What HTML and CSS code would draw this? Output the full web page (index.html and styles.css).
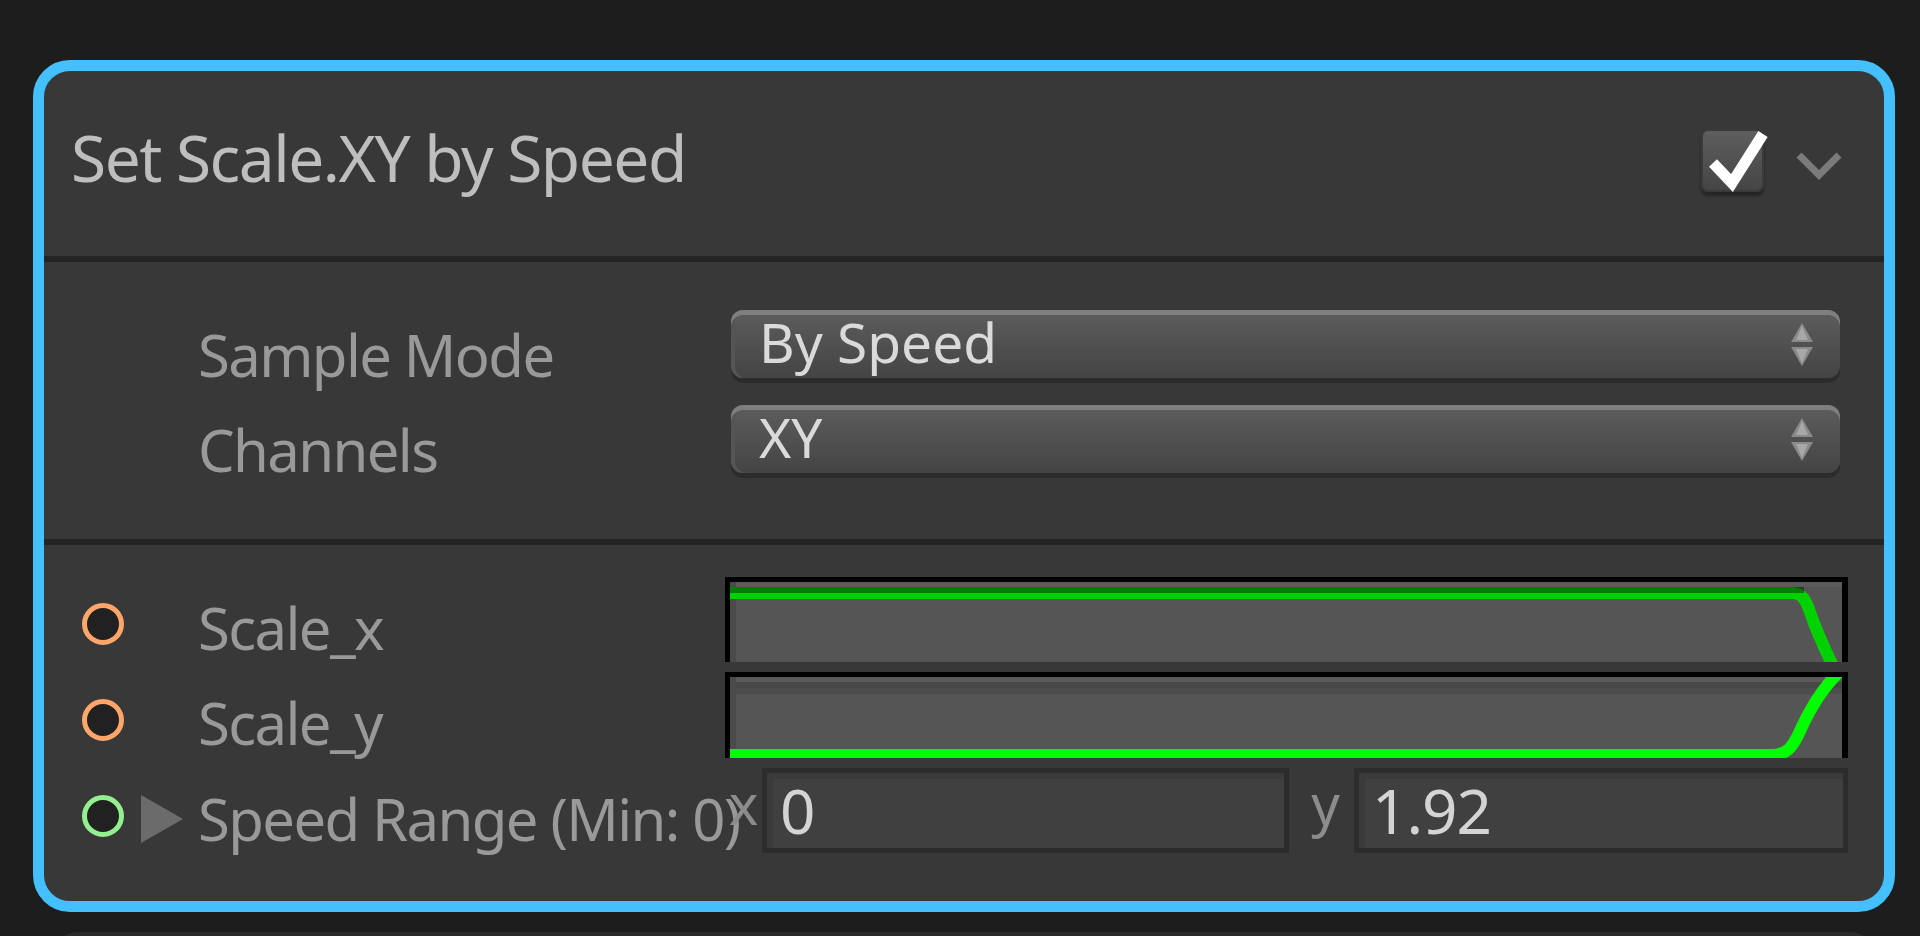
FILE: index.html
```html
<!DOCTYPE html>
<html>
<head>
<meta charset="utf-8">
<link rel="stylesheet" href="styles.css">
</head>
<body>
<div class="page">
  <div class="block">
    <div class="header">
      <div class="title">Set Scale.XY by Speed</div>
      <div class="header-tools">
        <div class="checkbox">
          <svg class="check" width="63" height="63" viewBox="0 0 63 63"><polyline points="12,34 31,54 62,5" fill="none" stroke="#ffffff" stroke-width="11"/></svg>
        </div>
        <svg class="chevron" width="46" height="28" viewBox="0 0 46 28"><polyline points="3,3 23,23 43,3" fill="none" stroke="#7b7b7b" stroke-width="7"/></svg>
      </div>
    </div>
    <div class="sep"></div>
    <div class="settings">
      <div class="setting-row">
        <div class="setting-label">Sample Mode</div>
        <div class="dropdown">
          <span class="dropdown-value">By Speed</span>
          <svg class="updown" width="28" height="46" viewBox="0 0 28 46"><polygon points="14,1 25,20 3,20" fill="#8a8a8a"/><polygon points="14,4 20,18 8,18" fill="#a8a8a8"/><polygon points="3,25 25,25 14,44" fill="#8a8a8a"/><polygon points="8,27 20,27 14,41" fill="#a8a8a8"/></svg>
        </div>
      </div>
      <div class="setting-row">
        <div class="setting-label">Channels</div>
        <div class="dropdown">
          <span class="dropdown-value">XY</span>
          <svg class="updown" width="28" height="46" viewBox="0 0 28 46"><polygon points="14,1 25,20 3,20" fill="#8a8a8a"/><polygon points="14,4 20,18 8,18" fill="#a8a8a8"/><polygon points="3,25 25,25 14,44" fill="#8a8a8a"/><polygon points="8,27 20,27 14,41" fill="#a8a8a8"/></svg>
        </div>
      </div>
    </div>
    <div class="sep"></div>
    <div class="props">
      <div class="prop-row row-a">
        <div class="port-cell"><div class="port port-orange"></div></div>
        <div class="prop-label">Scale_x</div>
        <div class="curve-field">
          <svg class="curve" width="1112" height="80" viewBox="0 0 1112 80">
            <rect x="0" y="0" width="1112" height="5" fill="#5b5b5b"/>
            <rect x="0" y="0" width="6" height="80" fill="#4a4a4a"/>
            <path d="M0,11 L1062,11 C1072,11 1076,18 1080,30 C1086,48 1096,70 1106,90" fill="none" stroke="#00d200" stroke-width="12"/>
            <rect x="0" y="5" width="1074" height="6" fill="#000" opacity="0.4"/>
          </svg>
        </div>
      </div>
      <div class="prop-row row-b">
        <div class="port-cell"><div class="port port-orange"></div></div>
        <div class="prop-label">Scale_y</div>
        <div class="curve-field tall">
          <svg class="curve" width="1112" height="81" viewBox="0 0 1112 81">
            <rect x="0" y="0" width="1112" height="5" fill="#5a5a5a"/>
            <rect x="0" y="5" width="1112" height="6" fill="#474747"/>
            <rect x="0" y="11" width="1112" height="6" fill="#4d4d4d"/>
            <rect x="0" y="0" width="6" height="81" fill="#4a4a4a"/>
            <path d="M0,78 L1040,78 C1056,78 1062,72 1070,54 C1078,36 1090,14 1108,-4" fill="none" stroke="#00ff00" stroke-width="12"/>
          </svg>
        </div>
      </div>
      <div class="prop-row row-c">
        <div class="port-cell"><div class="port port-green"></div><div class="expander"></div></div>
        <div class="prop-label">Speed Range (Min: 0)</div>
        <div class="vector-field">
          <span class="axis-label axis-x">x</span>
          <div class="num-field num-x">0</div>
          <span class="axis-label axis-y">y</span>
          <div class="num-field num-y">1.92</div>
        </div>
      </div>
    </div>
  </div>
  <div class="next-block"></div>
</div>
</body>
</html>
```

FILE: styles.css
```css
html, body {
  margin: 0;
  padding: 0;
}
body {
  background: #1d1d1d;
  font-family: "Noto Sans", "Open Sans", sans-serif;
  height: 936px;
  overflow: hidden;
}
.page {
  padding: 60px 0 0 33px;
}
.block {
  box-sizing: border-box;
  width: 1862px;
  height: 852px;
  border: 11px solid #44c0ff;
  border-radius: 37px;
  background: #383838;
  display: flex;
  flex-direction: column;
}
.header {
  height: 185px;
  display: flex;
  align-items: center;
  padding: 0 42px 0 27px;
}
.title {
  flex: 1;
  font-size: 64px;
  line-height: 1;
  letter-spacing: -1.5px;
  color: #bebebe;
  margin-bottom: 11px;
  white-space: nowrap;
}
.header-tools {
  display: flex;
  align-items: center;
  gap: 32px;
}
.checkbox {
  box-sizing: border-box;
  width: 63px;
  height: 63px;
  border-radius: 7px;
  background: linear-gradient(#5e5e5e, #454545);
  border: 2px solid #3a3a3a;
  box-shadow: 0 4px 3px rgba(0, 0, 0, 0.35);
  margin-bottom: 6px;
  position: relative;
}
.check {
  position: absolute;
  left: -2px;
  top: -2px;
  overflow: visible;
}
.chevron {
  display: block;
  margin-top: 4px;
}
.sep {
  height: 6px;
  background: #242424;
  flex: none;
}
.settings {
  box-sizing: border-box;
  height: 277px;
  padding: 48px 44px 0 154px;
  display: flex;
  flex-direction: column;
  gap: 22px;
}
.setting-row {
  display: flex;
  height: 73px;
}
.setting-label {
  width: 533px;
  flex: none;
  font-size: 58px;
  line-height: 70px;
  letter-spacing: -1.6px;
  padding-top: 10px;
  color: #999999;
  white-space: nowrap;
}
.dropdown {
  flex: 1;
  height: 68px;
  box-sizing: border-box;
  border-radius: 12px;
  background: linear-gradient(#5d5d5d, #444444);
  box-shadow: inset 0 5px 0 #7f7f7f, inset 4px 0 0 #555, 0 5px 0 #2c2c2c;
  display: flex;
  align-items: center;
  padding: 0 24px 0 28px;
}
.dropdown-value {
  flex: 1;
  font-size: 55px;
  line-height: 68px;
  color: #dadada;
  margin-top: -4px;
}
.updown {
  display: block;
  margin-top: 2px;
}
.props {
  box-sizing: border-box;
  height: 356px;
  padding-top: 32px;
  display: flex;
  flex-direction: column;
}
.prop-row {
  display: flex;
  height: 96px;
}
.row-a {
  height: 95px;
}
.port-cell {
  width: 154px;
  flex: none;
  display: flex;
  align-items: flex-start;
}
.port {
  box-sizing: border-box;
  width: 42px;
  height: 42px;
  border-radius: 50%;
  background: #212121;
  margin-left: 38px;
  margin-top: 26px;
}
.row-b .port, .row-c .port {
  margin-top: 27px;
}
.port-orange {
  border: 5px solid #ffa76a;
}
.port-green {
  border: 5px solid #93f08f;
}
.expander {
  width: 0;
  height: 0;
  border-top: 24px solid transparent;
  border-bottom: 24px solid transparent;
  border-left: 42px solid #6b6b6b;
  margin-left: 17px;
  margin-top: 27px;
}
.prop-label {
  width: 527px;
  flex: none;
  font-size: 58px;
  line-height: 90px;
  letter-spacing: -1.6px;
  padding-top: 6px;
  color: #999999;
  white-space: nowrap;
}
.curve-field {
  width: 1123px;
  height: 85px;
  box-sizing: border-box;
  border-top: 5px solid #000;
  border-left: 5px solid #000;
  border-right: 6px solid #000;
  background: #555555;
  overflow: hidden;
  flex: none;
}
.curve-field.tall {
  height: 86px;
}
.curve {
  display: block;
}
.vector-field {
  display: flex;
  width: 1123px;
  height: 85px;
  flex: none;
}
.axis-label {
  font-size: 56px;
  line-height: 70px;
  color: #8c8c8c;
  text-align: center;
}
.axis-x {
  width: 37px;
}
.axis-y {
  width: 65px;
  padding-left: 8px;
  box-sizing: border-box;
}
.num-field {
  box-sizing: border-box;
  height: 85px;
  border: 5px solid #2c2c2c;
  background: #404040;
  box-shadow: inset 6px 6px 0 #3a3a3a;
  font-size: 62px;
  line-height: 75px;
  letter-spacing: -1px;
  color: #d4d4d4;
  padding-left: 13px;
}
.num-x {
  width: 527px;
}
.num-y {
  width: 494px;
  padding-left: 13px;
}
.next-block {
  width: 1830px;
  height: 40px;
  margin-top: 20px;
  margin-left: 16px;
  background: #2a2a2a;
  border-radius: 30px 30px 0 0;
}
```
